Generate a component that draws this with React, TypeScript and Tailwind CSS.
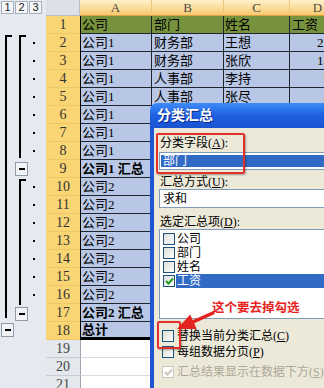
import clsx from "clsx";

type Row = { n: number; a?: string; b?: string; c?: string; d?: string; bold?: boolean };

const rows: Row[] = [
  { n: 1, a: "公司", b: "部门", c: "姓名", d: "工资" },
  { n: 2, a: "公司1", b: "财务部", c: "王想", d: "2500" },
  { n: 3, a: "公司1", b: "财务部", c: "张欣", d: "1800" },
  { n: 4, a: "公司1", b: "人事部", c: "李持", d: "900" },
  { n: 5, a: "公司1", b: "人事部", c: "张尽", d: "800" },
  { n: 6, a: "公司1", b: "人事部", c: "王五", d: "700" },
  { n: 7, a: "公司1", b: "销售部", c: "赵六", d: "600" },
  { n: 8, a: "公司1", b: "销售部", c: "钱七", d: "500" },
  { n: 9, a: "公司1 汇总", bold: true },
  { n: 10, a: "公司2", b: "财务部", c: "孙一", d: "900" },
  { n: 11, a: "公司2", b: "财务部", c: "周二", d: "800" },
  { n: 12, a: "公司2", b: "人事部", c: "吴三", d: "700" },
  { n: 13, a: "公司2", b: "人事部", c: "郑四", d: "600" },
  { n: 14, a: "公司2", b: "销售部", c: "冯五", d: "500" },
  { n: 15, a: "公司2", b: "销售部", c: "陈六", d: "400" },
  { n: 16, a: "公司2", b: "销售部", c: "褚七", d: "300" },
  { n: 17, a: "公司2 汇总", bold: true },
  { n: 18, a: "总计", bold: true },
  { n: 19 },
  { n: 20 },
  { n: 21 },
];

const detail = (n: number) => (n >= 2 && n <= 8) || (n >= 10 && n <= 16);

export default function App() {
  return (
    <div className="relative h-[388px] w-[324px] overflow-hidden bg-white font-['Liberation_Serif','Noto_Sans_CJK_SC',serif] text-black">
      <div className="flex">
        <Outline />
        <Sheet />
      </div>

      <SubtotalDialog />

      {/* annotations */}
      <div className="absolute left-[156px] top-[133px] h-[41px] w-[89px] rounded-[2px] border-2 border-[#E3302B] shadow-[1px_1px_2px_rgba(0,0,0,0.35)]" />
      <div className="absolute left-[157px] top-[321px] h-[28px] w-[24px] rounded-[2px] border-2 border-[#E3302B] shadow-[1px_1px_2px_rgba(0,0,0,0.3)]" />
      <div className="absolute left-[212px] top-[301px] whitespace-nowrap text-[12.5px] font-bold leading-[14px] text-[#E8231E] [text-shadow:0_0_1px_#fff]">
        这个要去掉勾选
      </div>
      <svg className="absolute left-[172px] top-[306px]" width="46" height="28" viewBox="0 0 46 28">
        <line x1="41" y1="7" x2="21" y2="15.8" stroke="#E3231E" strokeWidth="3.5" strokeLinecap="round" />
        <polygon points="5,23 24.7,23 18.2,8.4" fill="#E3231E" />
      </svg>
    </div>
  );
}

function Outline() {
  return (
    <div className="flex w-[46px] shrink-0 flex-col bg-[#E6EAF0]">
      <div className="flex h-[16px] gap-[1px] pl-[1px] pt-[1px]">
        {["1", "2", "3"].map((l) => (
          <div
            key={l}
            className="flex h-[13px] w-[13px] items-center justify-center border border-[#A7B0BE] bg-[#F4F6F9] font-['Liberation_Sans',sans-serif] text-[11px] leading-[11px] text-[#222]"
          >
            {l}
          </div>
        ))}
      </div>
      <div className="flex">
        <div className="flex w-[14px] flex-col pt-[19px]">
          <div className="ml-[5px] h-[283px] w-[7px] border-l-2 border-t-2 border-black" />
          <CollapseButton className="mt-[5px]" />
        </div>
        <div className="flex w-[14px] flex-col pt-[19px]">
          <div className="ml-[5px] h-[123px] w-[7px] border-l-2 border-t-2 border-black" />
          <CollapseButton className="mt-[4px]" />
          <div className="ml-[5px] mt-[3px] h-[126px] w-[7px] border-l-2 border-t-2 border-black" />
          <CollapseButton className="mt-[2px]" />
        </div>
        <div className="flex w-[18px] flex-col">
          {rows.map((r) => (
            <div key={r.n} className="flex h-[18px] items-center">
              {detail(r.n) && <div className="ml-[5px] h-[2px] w-[2px] bg-black" />}
            </div>
          ))}
        </div>
      </div>
    </div>
  );
}

function CollapseButton({ className }: { className?: string }) {
  return (
    <div
      className={clsx(
        "ml-[1px] flex h-[14px] w-[13px] items-center justify-center border border-[#8F9AAB] bg-[#F1F3F6]",
        className,
      )}
    >
      <div className="h-[2px] w-[6px] bg-black" />
    </div>
  );
}

function Sheet() {
  const cols = [
    { key: "A", w: "w-[72px]" },
    { key: "B", w: "w-[72px]" },
    { key: "C", w: "w-[66px]" },
    { key: "D", w: "w-[56px]" },
  ];
  return (
    <div className="flex flex-col">
      <div className="flex h-[16px]">
        <div className="w-[34px] shrink-0 border-b border-r border-[#B8BEC8] bg-[#DDE1E7]" />
        {cols.map((c) => (
          <div
            key={c.key}
            className={clsx(
              c.w,
              "flex shrink-0 items-center justify-center border-b border-r border-b-[#D9A441] border-r-[#E9C77F] bg-linear-to-b from-[#FEF1C8] to-[#F7C96C] text-[13px] leading-[14px] text-[#4A4A4A]",
            )}
          >
            {c.key}
          </div>
        ))}
      </div>
      {rows.map((r) => (
        <SheetRow key={r.n} row={r} />
      ))}
    </div>
  );
}

function SheetRow({ row }: { row: Row }) {
  const filled = row.n <= 18;
  const head = row.n === 1;
  const last = row.n === 18;
  const cell = clsx(
    "flex shrink-0 items-center overflow-hidden whitespace-nowrap border-r text-[13px] leading-[14px]",
    filled ? "border-[#20242E]" : "border-[#D6DAE1]",
    last ? "border-b-[3px] border-b-black" : "border-b",
    head ? "bg-[#77923C]" : filled ? "bg-[#B8C7E5]" : "bg-white",
    row.bold && "font-bold",
  );
  return (
    <div className="flex h-[18px]">
      <div
        className={clsx(
          "flex w-[34px] shrink-0 items-center justify-center border-b text-[14px] leading-[14px]",
          filled ? "border-[#EBC868] bg-[#F9D573] text-[#333]" : "border-[#C7CCD4] bg-[#E4E7EC] text-[#444]",
        )}
      >
        {row.n}
      </div>
      <div className={clsx(cell, "w-[72px] border-l pl-[1px]", filled ? "border-l-black" : "border-l-[#9EA6B2]")}>{row.a}</div>
      <div className={clsx(cell, "w-[72px] pl-[2px]")}>{row.b}</div>
      <div className={clsx(cell, "w-[66px] pl-[1px]")}>{row.c}</div>
      <div className={clsx(cell, "w-[56px]", head ? "pl-[2px]" : "justify-end pr-[2px]")}>{row.d}</div>
    </div>
  );
}

function Checkbox({ checked, disabled }: { checked?: boolean; disabled?: boolean }) {
  return (
    <div
      className={clsx(
        "flex h-[12px] w-[12px] shrink-0 items-center justify-center border",
        disabled ? "border-[#C9C7BA] bg-white" : "border-[#1C5180] bg-linear-to-br from-[#DCDCD7] to-white",
      )}
    >
      {checked && (
        <svg width="9" height="8" viewBox="0 0 9 8">
          <path
            d="M1 4 L3.5 6.5 L8 1.5"
            fill="none"
            stroke={disabled ? "#C9C7BA" : "#21A121"}
            strokeWidth="2"
          />
        </svg>
      )}
    </div>
  );
}

function SubtotalDialog() {
  const items = [
    { label: "公司" },
    { label: "部门" },
    { label: "姓名" },
    { label: "工资", checked: true, selected: true },
  ];
  return (
    <div className="absolute left-[150px] top-[103px] flex h-[300px] w-[200px] flex-col">
      <div className="flex h-[25px] items-center rounded-tl-[7px] bg-linear-to-b from-[#3F8CF8] via-[#1E5FE2] to-[#1A53D0] pl-[7px] text-[14px] font-bold text-white [text-shadow:1px_1px_0_#0A2A8A]">
        分类汇总
      </div>
      <div className="flex flex-1 flex-col border-l-4 border-[#1F55D2] bg-[#ECE9D8] pl-[5px] pt-[8px] text-[12px] leading-[14px]">
        <div className="h-[14px] whitespace-nowrap pl-[1px]">
          分类字段(<u>A</u>):
        </div>
        <div className="mt-[2px] h-[18px] border border-[#7F9DB9] bg-white py-[2px] pl-[1px]">
          <div className="h-full bg-[#316AC5] pl-[2px] leading-[12px] text-white">部门</div>
        </div>
        <div className="mt-[5px] h-[14px] whitespace-nowrap pl-[1px]">
          汇总方式(<u>U</u>):
        </div>
        <div className="flex h-[19px] items-center border border-[#7F9DB9] bg-white pl-[3px]">求和</div>
        <div className="mt-[7px] h-[14px] whitespace-nowrap pl-[1px]">
          选定汇总项(<u>D</u>):
        </div>
        <div className="flex h-[90px] flex-col border border-[#7F9DB9] bg-white pl-[3px] pt-[2px]">
          {items.map((it) => (
            <div key={it.label} className="flex h-[14px] items-center">
              <Checkbox checked={it.checked} />
              <div className={clsx("ml-[1px] h-[14px] pl-[1px] leading-[14px]", it.selected && "flex-1 bg-[#316AC5] text-white")}>
                {it.label}
              </div>
            </div>
          ))}
        </div>
        <div className="ml-[3px] mt-[10px] flex h-[14px] items-center gap-[3px] whitespace-nowrap">
          <Checkbox />
          <span>
            替换当前分类汇总(<u>C</u>)
          </span>
        </div>
        <div className="ml-[3px] mt-[2px] flex h-[14px] items-center gap-[3px] whitespace-nowrap">
          <Checkbox />
          <span>
            每组数据分页(<u>P</u>)
          </span>
        </div>
        <div className="ml-[3px] mt-[6px] flex h-[14px] items-center gap-[3px] whitespace-nowrap text-[#ACA899]">
          <Checkbox checked disabled />
          <span>
            汇总结果显示在数据下方(<u>S</u>)
          </span>
        </div>
      </div>
    </div>
  );
}
